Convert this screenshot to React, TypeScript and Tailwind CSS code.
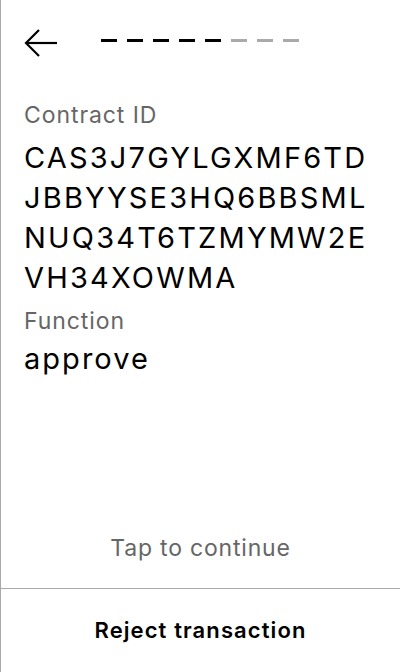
const font = { fontFamily: "Inter, 'Noto Sans', sans-serif" };

function BackArrow() {
  return (
    <svg width="34" height="30" viewBox="0 0 34 30" fill="none" stroke="black" strokeWidth="2.2">
      <path d="M2 15H33" />
      <path d="M15 2L2 15L15 28" />
    </svg>
  );
}

function Steps({ total, done }: { total: number; done: number }) {
  return (
    <div className="flex gap-[10px]">
      {Array.from({ length: total }).map((_, i) => (
        <div key={i} className={i < done ? "h-[3px] w-4 bg-black" : "h-[3px] w-4 bg-[#aaaaaa]"} />
      ))}
    </div>
  );
}

export default function App() {
  return (
    <div className="flex h-[672px] w-[400px] flex-col border-l border-[#a9a9a9] bg-white text-black" style={font}>
      <div className="flex items-center pl-[23px] pt-[28px]">
        <BackArrow />
        <div className="mb-[5px] ml-[43px]">
          <Steps total={8} done={5} />
        </div>
      </div>

      <div className="flex flex-1 flex-col px-[23px] pt-[43px]">
        <div className="text-[23px] leading-[28px] tracking-[0.04em] text-[#666666]">Contract ID</div>
        <div className="mt-[9px] break-all text-[29px] leading-[40px] tracking-[0.075em]">
          CAS3J7GYLGXMF6TDJBBYYSE3HQ6BBSMLNUQ34T6TZMYMW2EVH34XOWMA
        </div>
        <div className="mt-[9px] text-[23px] leading-[28px] tracking-[0.04em] text-[#666666]">Function</div>
        <div className="mt-[4px] text-[29px] leading-[40px] tracking-[0.07em]">approve</div>
      </div>

      <div className="pb-[26px] text-center text-[23px] leading-[28px] tracking-[0.035em] text-[#666666]">
        Tap to continue
      </div>
      <div className="flex h-[84px] items-center justify-center border-t border-[#a9a9a9]">
        <span className="text-[22px] font-semibold tracking-[0.05em]">Reject transaction</span>
      </div>
    </div>
  );
}
